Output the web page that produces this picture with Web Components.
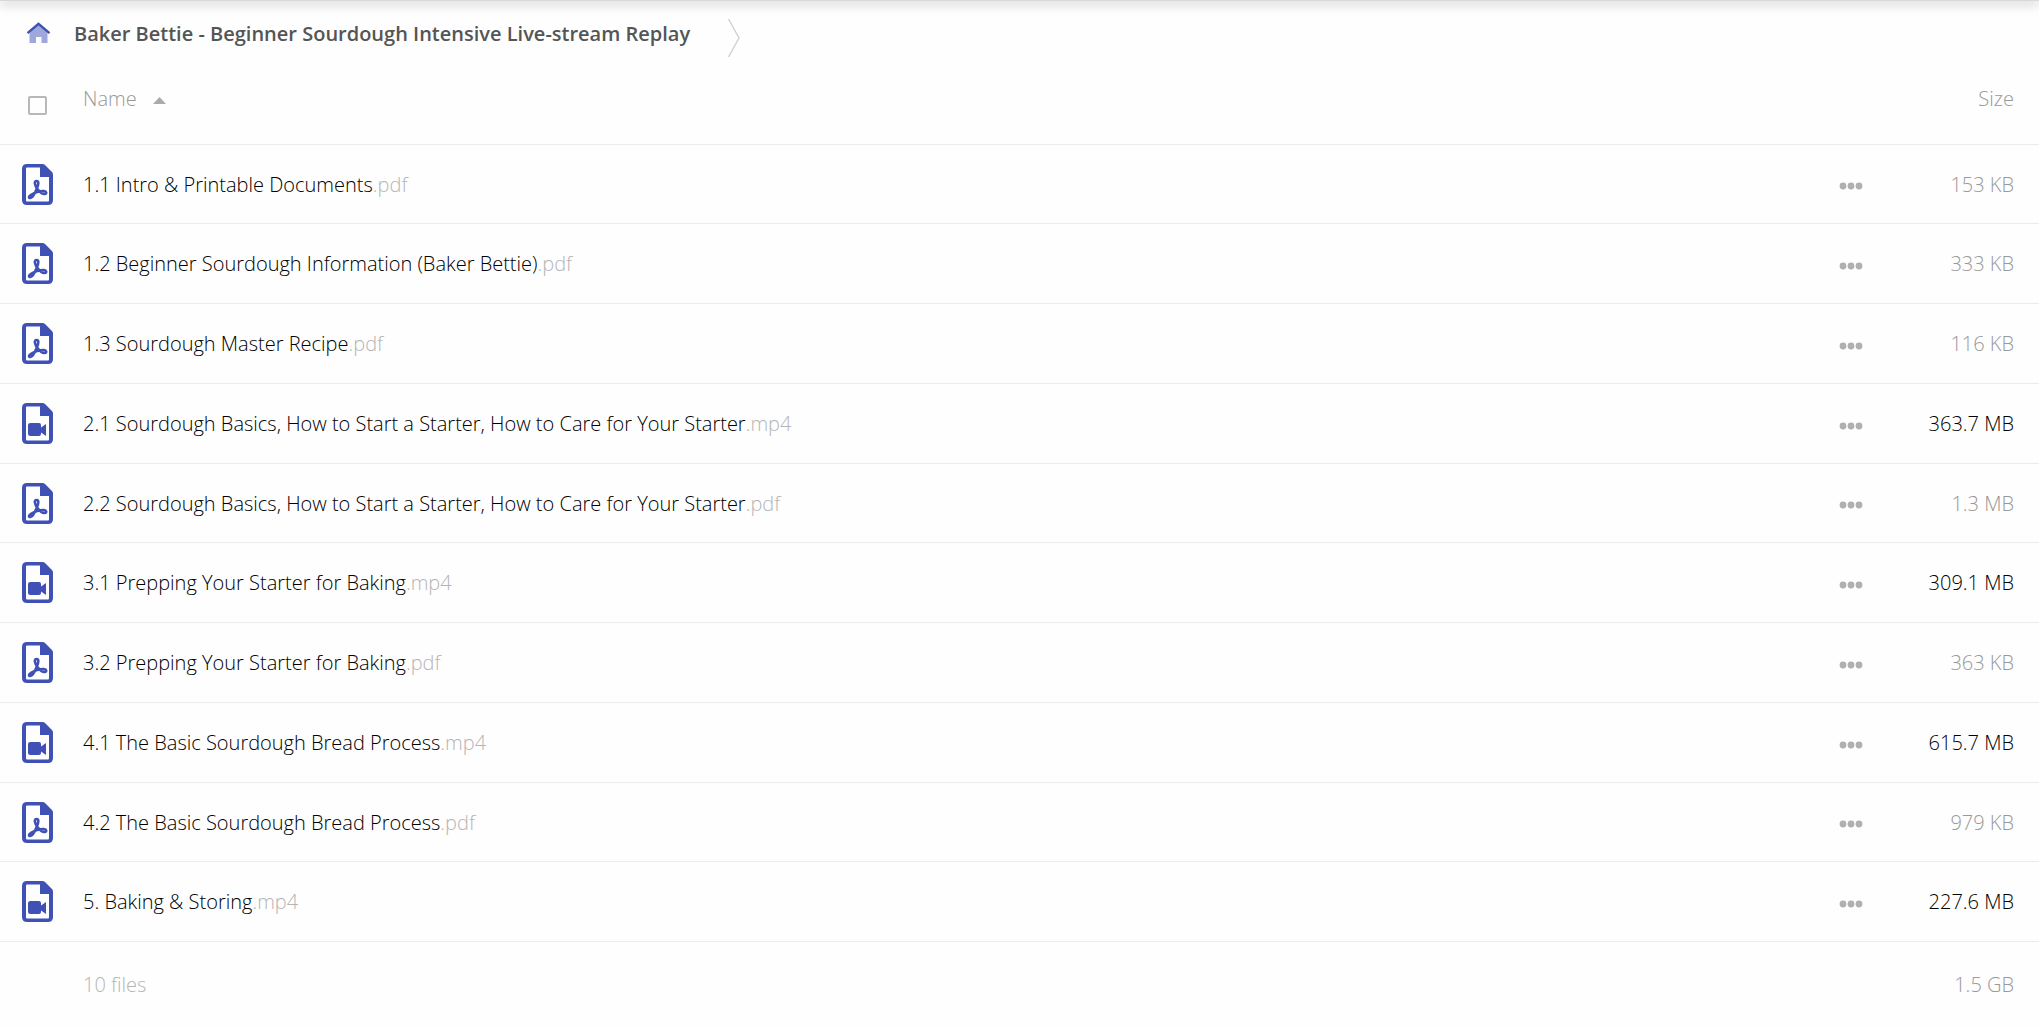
<!DOCTYPE html>
<html lang="en">
<head>
  <meta charset="utf-8">
  <meta name="viewport" content="width=device-width, initial-scale=1">
  <title>Baker Bettie - Beginner Sourdough Intensive Live-stream Replay</title>
  <style>
    body {
      margin: 0;
      background: #fefefe;
      font-family: "Open Sans", sans-serif;
      font-size: 20px;
      font-weight: 300;
      line-height: 29px;
      color: #000;
      --accent: #3f51b5;
      --muted: #999;
      --faint: #b5b5b5;
      --line: #ebebeb;
    }
  </style>
</head>
<body>
  <file-browser>
    <crumb-bar slot="path">Baker Bettie - Beginner Sourdough Intensive Live-stream Replay</crumb-bar>
    <file-table></file-table>
  </file-browser>

  <script>
    const files = [
      { name: '1.1 Intro & Printable Documents', type: 'pdf', size: '153 KB' },
      { name: '1.2 Beginner Sourdough Information (Baker Bettie)', type: 'pdf', size: '333 KB' },
      { name: '1.3 Sourdough Master Recipe', type: 'pdf', size: '116 KB' },
      { name: '2.1 Sourdough Basics, How to Start a Starter, How to Care for Your Starter', type: 'mp4', size: '363.7 MB' },
      { name: '2.2 Sourdough Basics, How to Start a Starter, How to Care for Your Starter', type: 'pdf', size: '1.3 MB' },
      { name: '3.1 Prepping Your Starter for Baking', type: 'mp4', size: '309.1 MB' },
      { name: '3.2 Prepping Your Starter for Baking', type: 'pdf', size: '363 KB' },
      { name: '4.1 The Basic Sourdough Bread Process', type: 'mp4', size: '615.7 MB' },
      { name: '4.2 The Basic Sourdough Bread Process', type: 'pdf', size: '979 KB' },
      { name: '5. Baking & Storing', type: 'mp4', size: '227.6 MB' },
    ];

    class FileBrowser extends HTMLElement {
      constructor() {
        super();
        this.attachShadow({ mode: 'open' });
      }

      connectedCallback() {
        this.shadowRoot.innerHTML = `
        <style>
          :host {
            display: flex;
            flex-direction: column;
          }

          /* lower edge of the toolbar, only its shadow shows */
          .edge {
            height: 1px;
            background: #d8d8d8;
            box-shadow: 0 1px 12px 1px rgba(0, 0, 0, 0.4);
          }
        </style>

        <div class="edge"></div>
        <slot name="path"></slot>
        <main><slot></slot></main>
      `;
      }
    }

    class CrumbBar extends HTMLElement {
      constructor() {
        super();
        this.attachShadow({ mode: 'open' });
      }

      connectedCallback() {
        this.shadowRoot.innerHTML = `
        <style>
          :host {
            display: block;
          }

          nav {
            display: flex;
            align-items: center;
            height: 64px;
            padding-left: 26px;
          }

          a {
            display: flex;
            color: #555;
            font-weight: 600;
            text-decoration: none;
          }

          .home {
            margin-right: 23px;
          }

          .arrow {
            margin: 10px 0 0 37px;
          }
        </style>

        <nav aria-label="Path">
          <a class="home" href="#" aria-label="Home">
            <svg width="25" height="22" viewBox="0 0 25 22">
              <path d="M3.500 10 12.500 2.500 21.500 10V21H15.500V15H10V21H3.500Z" fill="#9fa8da"/>
              <path d="M1.500 11.200 12.500 1.800 23.500 11.200" fill="none" stroke="#3f51b5" stroke-width="2.400"/>
            </svg>
          </a>
          <a href="#"><slot></slot></a>
          <svg class="arrow" width="14" height="40" viewBox="0 0 14 40" aria-hidden="true">
            <path d="M1.500 1 12 20 1.500 39" fill="none" stroke="#d0d0d0" stroke-width="1.400"/>
          </svg>
        </nav>
      `;
      }
    }

    class FileIcon extends HTMLElement {
      constructor() {
        super();
        this.attachShadow({ mode: 'open' });
      }

      connectedCallback() {
        const glyphs = {
          pdf: `<path d="M14.500 17C11.800 17 12.600 21.500 15.500 25 18 28.300 21 30.300 22.800 30 25 29.700 24.600 27.200 22 27 17 26.700 12 29 9 30.800 6.500 32.200 6.500 34.100 8.200 34 10.800 33.800 13.500 28 14.800 24.500 16.800 20 17 17 14.500 17Z" fill="none" stroke="#3f51b5" stroke-width="2.600" stroke-linejoin="round"/>`,
          mp4: `<path d="M8.500 20H17Q19 20 19 22V24.500L24 21V33L19 29.500V31Q19 33 17 33H8.500Q6 33 6 31V22Q6 20 8.500 20Z" fill="#3f51b5"/>`,
        };

        this.shadowRoot.innerHTML = `
        <style>
          :host {
            display: flex;
          }
        </style>

        <svg width="31" height="41" viewBox="0 0 31 41" aria-hidden="true">
          <path fill-rule="evenodd" d="M5 0H20.500Q22 0 23 1L30 8Q31 9 31 10.500V36Q31 41 26 41H5Q0 41 0 36V5Q0 0 5 0ZM5 3.500Q4 3.500 4 4.500V36.500Q4 37.500 5 37.500H26Q27 37.500 27 36.500V13H18V3.500Z" fill="#3f51b5"/>
          ${glyphs[this.getAttribute('type')]}
        </svg>
      `;
      }
    }

    class MoreButton extends HTMLElement {
      constructor() {
        super();
        this.attachShadow({ mode: 'open' });
      }

      connectedCallback() {
        this.shadowRoot.innerHTML = `
        <style>
          :host {
            display: inline-flex;
            vertical-align: middle;
          }

          button {
            display: flex;
            border: none;
            background: none;
            padding: 8px;
            cursor: pointer;
          }
        </style>

        <button type="button" aria-label="More actions">
          <svg width="24" height="8" viewBox="0 0 24 8" fill="#b0b0b0">
            <circle cx="4" cy="4" r="3.400"/>
            <circle cx="12" cy="4" r="3.400"/>
            <circle cx="20" cy="4" r="3.400"/>
          </svg>
        </button>
      `;
      }
    }

    class FileTable extends HTMLElement {
      constructor() {
        super();
        this.attachShadow({ mode: 'open' });
      }

      row(file) {
        const name = file.name.replace('&', '&amp;');
        // big files get a darker size
        const big = parseFloat(file.size) > 100 && file.size.endsWith('MB');

        return `
          <tr>
            <td class="icon"><file-icon type="${file.type}"></file-icon></td>
            <td><a href="#">${name}<span class="ext">.${file.type}</span></a></td>
            <td class="more"><more-button></more-button></td>
            <td class="size ${big ? 'big' : ''}">${file.size}</td>
          </tr>`;
      }

      connectedCallback() {
        this.shadowRoot.innerHTML = `
        <style>
          :host {
            display: block;
          }

          table {
            width: 100%;
            border-collapse: separate;
            border-spacing: 0;
            table-layout: fixed;
          }

          th, td {
            box-sizing: border-box;
            height: 80px;
            padding: 0;
            border-bottom: 1px solid var(--line);
            font-weight: 300;
            text-align: left;
          }

          tbody tr:nth-child(4n + 1) td {
            height: 79px;
          }

          th {
            padding-bottom: 12px;
            color: var(--muted);
          }

          .icon {
            width: 83px;
            padding-left: 22px;
          }

          .check {
            padding: 2px 0 0 28px;
          }

          .more {
            width: 60px;
          }

          .size {
            width: 148px;
            padding-right: 25px;
            color: var(--muted);
            text-align: right;
          }

          .big {
            color: inherit;
          }

          a {
            color: inherit;
            text-decoration: none;
          }

          .ext {
            color: var(--faint);
          }

          input {
            display: block;
            appearance: none;
            box-sizing: border-box;
            width: 19px;
            height: 19px;
            margin: 0;
            border: 2px solid #b8b8b8;
            border-radius: 2px;
          }

          .sort {
            display: flex;
            align-items: center;
            gap: 16px;
            border: none;
            background: none;
            padding: 0;
            color: inherit;
            font: inherit;
            cursor: pointer;
          }

          .sort svg {
            padding-top: 4px;
          }

          tfoot td {
            height: 85px;
            border: none;
            color: var(--faint);
          }
        </style>

        <table>
          <thead>
            <tr>
              <th class="icon check"><input type="checkbox" aria-label="Select all"></th>
              <th>
                <button class="sort" type="button">
                  Name
                  <svg width="13" height="7" viewBox="0 0 13 7" aria-hidden="true">
                    <path d="M0 7 6.500 0 13 7Z" fill="#aaa"/>
                  </svg>
                </button>
              </th>
              <th class="more"></th>
              <th class="size">Size</th>
            </tr>
          </thead>
          <tbody>${files.map((file) => this.row(file)).join('')}</tbody>
          <tfoot>
            <tr>
              <td></td>
              <td>${files.length} files</td>
              <td></td>
              <td class="size">1.5 GB</td>
            </tr>
          </tfoot>
        </table>
      `;
      }
    }

    customElements.define('file-icon', FileIcon);
    customElements.define('more-button', MoreButton);
    customElements.define('file-table', FileTable);
    customElements.define('crumb-bar', CrumbBar);
    customElements.define('file-browser', FileBrowser);
  </script>
</body>
</html>
